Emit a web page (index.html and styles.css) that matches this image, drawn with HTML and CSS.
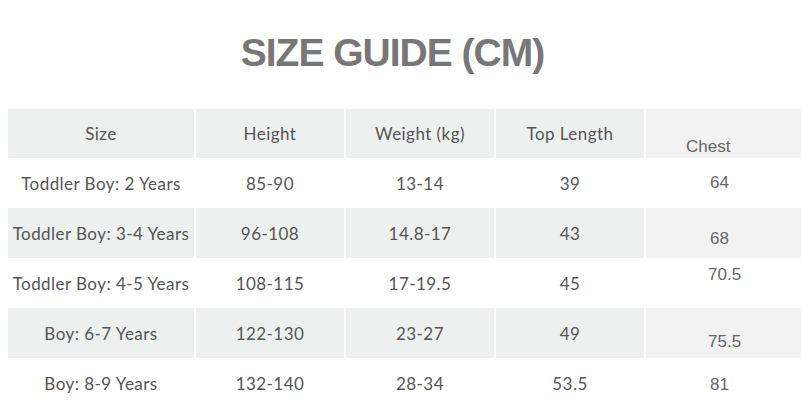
FILE: index.html
```html
<!DOCTYPE html>
<html>
<head>
<meta charset="utf-8">
<link rel="stylesheet" href="styles.css">
</head>
<body>
<h1 class="title">SIZE GUIDE (CM)</h1>
<div class="table">
  <div class="cell head">Size</div>
  <div class="cell head">Height</div>
  <div class="cell head">Weight (kg)</div>
  <div class="cell head">Top Length</div>
  <div class="cell chest head-chest shift-13">Chest</div>

  <div class="cell">Toddler Boy: 2 Years</div>
  <div class="cell">85-90</div>
  <div class="cell">13-14</div>
  <div class="cell">39</div>
  <div class="cell chest">64</div>

  <div class="cell alt">Toddler Boy: 3-4 Years</div>
  <div class="cell alt">96-108</div>
  <div class="cell alt">14.8-17</div>
  <div class="cell alt">43</div>
  <div class="cell chest chest-alt shift-6">68</div>

  <div class="cell">Toddler Boy: 4-5 Years</div>
  <div class="cell">108-115</div>
  <div class="cell">17-19.5</div>
  <div class="cell">45</div>
  <div class="cell chest up-8">70.5</div>

  <div class="cell alt">Boy: 6-7 Years</div>
  <div class="cell alt">122-130</div>
  <div class="cell alt">23-27</div>
  <div class="cell alt">49</div>
  <div class="cell chest chest-alt shift-8">75.5</div>

  <div class="cell">Boy: 8-9 Years</div>
  <div class="cell">132-140</div>
  <div class="cell">28-34</div>
  <div class="cell">53.5</div>
  <div class="cell chest shift-1">81</div>
</div>
</body>
</html>
```
FILE: styles.css
```css
html, body {
  background: #ffffff;
}
body {
  margin: 8px 0 0 8px;
  overflow: hidden;
}
.title {
  margin: 25px 0 0 0;
  padding-right: 24px;
  text-align: center;
  font-family: "Liberation Sans", Arial, sans-serif;
  font-weight: bold;
  font-size: 39px;
  line-height: 39px;
  letter-spacing: -1px;
  color: #777777;
}
.table {
  margin-top: 37px;
  display: grid;
  grid-template-columns: 186px 148px 148px 148px 155px;
  grid-auto-rows: 50px;
  grid-template-rows: 49px;
  column-gap: 2px;
  font-family: Lato, "Open Sans", sans-serif;
  font-size: 17px;
  letter-spacing: 0.45px;
  color: #555555;
}
.cell {
  display: flex;
  align-items: center;
  justify-content: center;
  white-space: nowrap;
}
.head, .alt {
  background: #eef0ef;
}
.chest {
  font-family: "Liberation Sans", Arial, sans-serif;
  font-size: 17px;
  letter-spacing: 0;
  color: #666666;
  justify-content: flex-start;
  padding-left: 64px;
}
.head-chest {
  background: #f2f2f2;
  padding-left: 40px;
}
.chest-alt {
  background: #f2f2f2;
}
.shift-13 { padding-top: 26px; }
.shift-6 { padding-top: 12px; }
.shift-8 { padding-top: 17px; padding-left: 62px; }
.shift-1 { padding-top: 3px; }
.up-8 { padding-bottom: 16px; padding-left: 62px; }
```
